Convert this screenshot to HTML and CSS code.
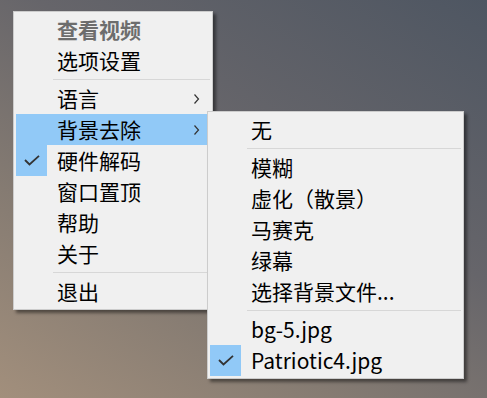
FILE: index.html
```html
<!DOCTYPE html>
<html lang="zh-CN">

<head>
  <meta charset="UTF-8">
  <meta name="viewport" content="width=device-width, initial-scale=1.0">
  <title>菜单</title>
  <link rel="stylesheet" href="styles.css">
</head>

<body>
  <div class="menu main-menu">
    <div class="item title"><span class="mark"></span><span class="label">查看视频</span></div>
    <div class="item"><span class="mark"></span><span class="label">选项设置</span></div>
    <div class="sep"></div>
    <div class="item"><span class="mark"></span><span class="label">语言</span>
      <svg class="arrow" width="6" height="10" viewBox="0 0 6 10"><polyline points="0.5,0.5 4.5,5 0.5,9.5" fill="none" stroke="#333" stroke-width="1.2"/></svg>
    </div>
    <div class="item active"><span class="mark"></span><span class="label">背景去除</span>
      <svg class="arrow" width="6" height="10" viewBox="0 0 6 10"><polyline points="0.5,0.5 4.5,5 0.5,9.5" fill="none" stroke="#333" stroke-width="1.2"/></svg>
    </div>
    <div class="item"><span class="mark checked">
        <svg width="16" height="11" viewBox="0 0 16 11"><polyline points="1,5 5.5,9.5 15,0.8" fill="none" stroke="#333" stroke-width="1.8"/></svg>
      </span><span class="label">硬件解码</span></div>
    <div class="item"><span class="mark"></span><span class="label">窗口置顶</span></div>
    <div class="item"><span class="mark"></span><span class="label">帮助</span></div>
    <div class="item"><span class="mark"></span><span class="label">关于</span></div>
    <div class="sep"></div>
    <div class="item"><span class="mark"></span><span class="label">退出</span></div>
  </div>

  <div class="menu sub-menu">
    <div class="item"><span class="mark"></span><span class="label">无</span></div>
    <div class="sep"></div>
    <div class="item"><span class="mark"></span><span class="label">模糊</span></div>
    <div class="item"><span class="mark"></span><span class="label">虚化（散景）</span></div>
    <div class="item"><span class="mark"></span><span class="label">马赛克</span></div>
    <div class="item"><span class="mark"></span><span class="label">绿幕</span></div>
    <div class="item"><span class="mark"></span><span class="label">选择背景文件...</span></div>
    <div class="sep"></div>
    <div class="item"><span class="mark"></span><span class="label">bg-5.jpg</span></div>
    <div class="item"><span class="mark checked">
        <svg width="16" height="11" viewBox="0 0 16 11"><polyline points="1,5 5.5,9.5 15,0.8" fill="none" stroke="#333" stroke-width="1.8"/></svg>
      </span><span class="label">Patriotic4.jpg</span></div>
  </div>
</body>

</html>
```

FILE: styles.css
```css
html,
body {
  margin: 0;
  height: 100%;
}

body {
  position: relative;
  overflow: hidden;
  font-family: "Noto Sans CJK SC", "Noto Sans", sans-serif;
  background: linear-gradient(32deg, #a28f7c 0%, #857b72 30%, #66656a 60%, #4e5662 100%);
}

.menu {
  position: absolute;
  box-sizing: border-box;
  padding: 2px;
  background: #f0f0f0;
  border: 1px solid #cccccc;
  box-shadow: 3px 3px 3px rgba(0, 0, 0, 0.45);
}

.main-menu {
  left: 13px;
  top: 11px;
  width: 200px;
}

.sub-menu {
  left: 207px;
  top: 111px;
  width: 257px;
}

.item {
  display: flex;
  align-items: center;
  height: 31px;
  font-size: 21px;
  color: #000;
}

.item.active {
  background: #91c9f7;
}

.item.title {
  color: #6d6d6d;
  font-weight: bold;
}

.mark {
  width: 31px;
  height: 31px;
  margin-right: 10px;
  display: flex;
  align-items: center;
  justify-content: center;
  flex-shrink: 0;
}

.mark.checked {
  background: #91c9f7;
}

.label {
  flex: 1;
  white-space: nowrap;
  line-height: 31px;
}

.arrow {
  margin-right: 10px;
}

.sep {
  height: 1px;
  margin: 3px 0 3px 37px;
  background: #d7d7d7;
}
```
